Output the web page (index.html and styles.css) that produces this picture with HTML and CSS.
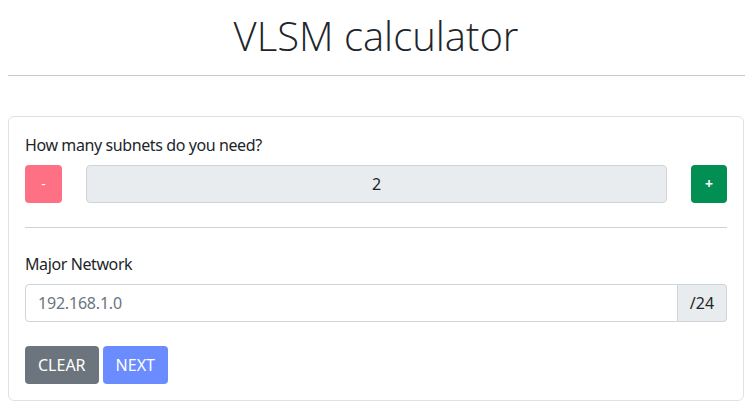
FILE: index.html
```html
<!DOCTYPE html>
<html lang="en">
<head>
<meta charset="utf-8">
<title>VLSM calculator</title>
<link rel="stylesheet" href="styles.css">
</head>
<body>
<div class="page">
  <h1 class="title">VLSM calculator</h1>
  <hr class="rule">
  <div class="card">
    <label class="label">How many subnets do you need?</label>
    <div class="counter">
      <button class="btn btn-minus" type="button">-</button>
      <div class="count">2</div>
      <button class="btn btn-plus" type="button">+</button>
    </div>
    <hr class="rule inner">
    <label class="label">Major Network</label>
    <div class="input-group">
      <div class="net-input">192.168.1.0</div>
      <div class="addon">/24</div>
    </div>
    <div class="actions">
      <button class="btn btn-clear" type="button">CLEAR</button>
      <button class="btn btn-next" type="button">NEXT</button>
    </div>
  </div>
</div>
</body>
</html>
```
FILE: styles.css
```css
* { box-sizing: border-box; }
html, body { margin: 0; padding: 0; background: #fff; }
body {
  font-family: "Noto Sans", "Open Sans", sans-serif;
  font-size: 16px;
  line-height: 24px;
  color: #212529;
}
.page { padding: 0 10px 0 8px; }
.title {
  margin: 12px 0 0;
  font-family: "Open Sans", sans-serif;
  font-weight: 300;
  font-size: 40px;
  line-height: 48px;
  text-align: center;
  color: #212529;
}
.rule {
  border: 0;
  border-top: 1px solid #c8c8c8;
  margin: 15px -1px 0 0;
  height: 0;
}
.card {
  margin-top: 40px;
  border: 1px solid #dee2e6;
  border-radius: 6px;
  padding: 16px;
}
.label { display: block; margin-bottom: 8px; letter-spacing: -0.4px; }
.counter {
  display: grid;
  grid-template-columns: 37px 1fr 36px;
  column-gap: 24px;
  height: 38px;
}
.btn {
  font: inherit;
  border: 0;
  border-radius: 4px;
  color: #fff;
  height: 38px;
  padding: 0 13px;
  display: flex;
  align-items: center;
  justify-content: center;
}
.btn-minus { background: #fe7083; padding: 0; font-size: 14px; }
.btn-plus { background: #028f53; padding: 0; font-size: 14px; font-weight: 700; }
.count {
  background: #e9ecef;
  border: 1px solid #ced4da;
  border-radius: 4px;
  display: flex;
  align-items: center;
  justify-content: center;
}
.rule.inner { margin: 24px 0; border-top-color: #cfd1d3; }
.input-group { display: flex; height: 38px; }
.net-input {
  flex: 1;
  border: 1px solid #ced4da;
  border-radius: 4px 0 0 4px;
  padding: 0 12px;
  display: flex;
  align-items: center;
  color: #6c757d;
  letter-spacing: -0.2px;
}
.addon {
  width: 49px;
  border: 1px solid #ced4da;
  border-left: 0;
  border-radius: 0 4px 4px 0;
  background: #e9ecef;
  display: flex;
  align-items: center;
  justify-content: center;
}
.actions { display: flex; gap: 4px; margin-top: 24px; }
.btn-clear { background: #6c757d; }
.btn-next { background: #6b8cff; }
```
